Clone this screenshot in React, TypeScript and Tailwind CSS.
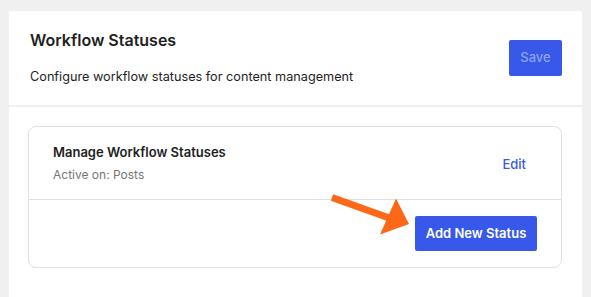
import React from 'react';

const font = { fontFamily: 'Inter, "Noto Sans", sans-serif' };

function Arrow() {
  // orange callout arrow pointing at the add button
  return (
    <svg className="absolute left-0 top-0 pointer-events-none" width="591" height="297" viewBox="0 0 591 297">
      <line x1="332" y1="197.5" x2="392" y2="219" stroke="#fd6718" strokeWidth="7" />
      <polygon points="396,198.5 380,234.5 409,224" fill="#fd6718" />
    </svg>
  );
}

export default function App() {
  return (
    <div className="relative w-[591px] h-[297px] bg-[#f0f0f0] px-[9px] pt-[11px] flex flex-col gap-[2px] overflow-hidden" style={font}>
      {/* Header */}
      <div className="h-[94px] bg-white flex items-center justify-between pl-[21px] pr-[20px] shrink-0">
        <div className="flex flex-col">
          <h1 className="text-[16px] font-semibold text-[#1e1e1e] leading-[20px]">Workflow Statuses</h1>
          <p className="text-[12.7px] text-[#1e1e1e] leading-[18px] mt-[18px]">Configure workflow statuses for content management</p>
        </div>
        <button className="w-[53px] h-[36px] rounded-[2px] bg-[#3858e9] text-[#8ea2f2] text-[13px] font-medium">Save</button>
      </div>

      {/* Body */}
      <div className="flex-1 bg-white pl-[19px] pr-[20px] pt-[19px]">
        <div className="border border-[#e0e0e0] rounded-[8px]">
          <div className="h-[72px] flex items-center justify-between pl-[24px] pr-[23px]">
            <div className="flex flex-col">
              <span className="text-[13px] font-semibold text-[#1e1e1e] leading-[18px]">Manage Workflow Statuses</span>
              <span className="text-[12px] text-[#757575] leading-[18px] mt-[5px]">Active on: Posts</span>
            </div>
            <button className="px-[12px] h-[32px] mt-[3px] text-[13px] font-medium text-[#3858e9]">Edit</button>
          </div>
          <div className="border-t border-[#e0e0e0] h-[68px] flex items-center justify-end pr-[24px]">
            <button className="w-[122px] h-[35px] rounded-[2px] bg-[#3858e9] text-white text-[13px] font-semibold">Add New Status</button>
          </div>
        </div>
      </div>

      <Arrow />
    </div>
  );
}
